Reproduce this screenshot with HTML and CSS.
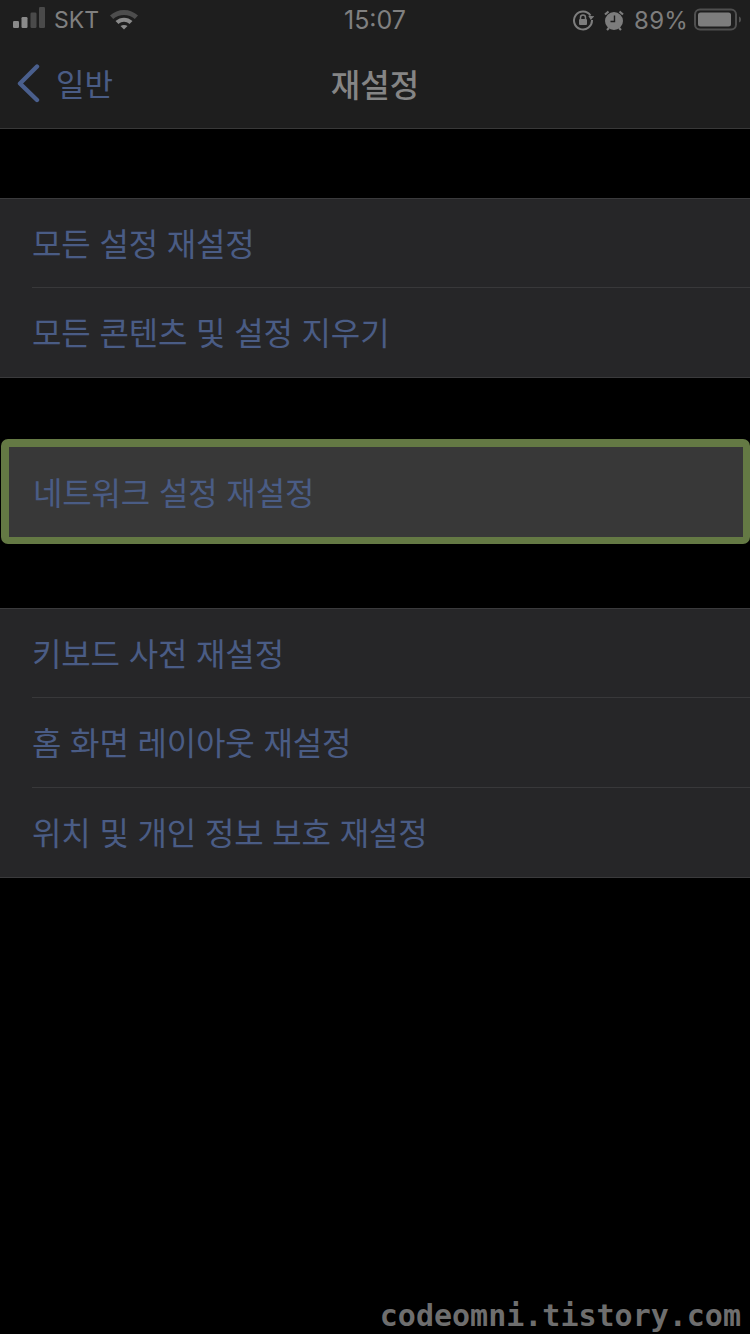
FILE: index.html
```html
<!DOCTYPE html>
<html lang="ko">
<head>
<meta charset="utf-8">
<title>재설정</title>
<link rel="stylesheet" href="styles.css">
</head>
<body>
<header class="top">
  <div class="status">
    <div class="status-left">
      <svg class="signal" width="34" height="22" viewBox="0 0 34 22"><rect x="0" y="14" width="6" height="7" rx="1.200" fill="#8a8a8a"/><rect x="8.500" y="10" width="6" height="11" rx="1.200" fill="#8a8a8a"/><rect x="17.500" y="5.500" width="6" height="15.500" rx="1.200" fill="#4a4a4a"/><rect x="26" y="0" width="6" height="21" rx="1.200" fill="#4a4a4a"/></svg>
      <span class="carrier">SKT</span>
      <svg class="wifi" width="30" height="24" viewBox="0 0 30 24"><path d="M1 8.500C8.500 1 21.500 1 29 8.500L25.800 12C20 6.500 10 6.500 4.200 12Z" fill="#4d4d4d"/><path d="M6.500 14C11.500 9.500 18.500 9.500 23.500 14L20.500 17C17 14 13 14 9.500 17Z" fill="#8a8a8a"/><path d="M11.500 19C13.500 17.500 16.500 17.500 18.500 19L15 22.500Z" fill="#8a8a8a"/></svg>
    </div>
    <span class="time">15:07</span>
    <div class="status-right">
      <svg width="22" height="22" viewBox="0 0 22 22"><path d="M18.500 6.500A9 9 0 1 0 20 11" fill="none" stroke="#7d7d7d" stroke-width="2"/><path d="M16 7h6l-3 4z" fill="#7d7d7d" transform="rotate(5 19 9)"/><rect x="7" y="10" width="8" height="6" rx="1" fill="#7d7d7d"/><path d="M8.500 10V8.500a2.500 2.500 0 0 1 5 0V10" fill="none" stroke="#7d7d7d" stroke-width="1.500"/></svg>
      <svg class="alarm" width="20" height="21" viewBox="0 0 20 21"><circle cx="10" cy="11" r="9" fill="#7d7d7d"/><path d="M1 4.500L4.500 1.500M19 4.500L15.500 1.500M3 20L5 18M17 20L15 18" stroke="#7d7d7d" stroke-width="2.200"/><path d="M10.500 5.500v6H6.500" fill="none" stroke="#1e1e1e" stroke-width="1.400"/></svg>
      <span class="pct">89%</span>
      <svg width="48" height="24" viewBox="0 0 48 24"><rect x="1" y="1.500" width="41" height="20" rx="5" fill="none" stroke="#4f4f4f" stroke-width="2"/><rect x="4" y="4.500" width="33" height="14" rx="2.500" fill="#7d7d7d"/><path d="M45 8.500c1.500.5 2 1.500 2 3s-.5 2.500-2 3z" fill="#4f4f4f"/></svg>
    </div>
  </div>
  <nav class="nav">
    <div class="back">
      <svg width="26" height="40" viewBox="0 0 26 40"><path d="M22 3.500L5 20.500L22 37" fill="none" stroke="#4a5f8d" stroke-width="4.400" stroke-linecap="round" stroke-linejoin="round"/></svg>
      <span class="back-label">일반</span>
    </div>
    <h1 class="title">재설정</h1>
  </nav>
</header>
<main>
  <section class="group group-first">
    <div class="row"><span class="label">모든 설정 재설정</span></div>
    <div class="row"><span class="label">모든 콘텐츠 및 설정 지우기</span></div>
  </section>
  <section class="highlight">
    <span class="label">네트워크 설정 재설정</span>
  </section>
  <section class="group">
    <div class="row"><span class="label">키보드 사전 재설정</span></div>
    <div class="row"><span class="label">홈 화면 레이아웃 재설정</span></div>
    <div class="row"><span class="label">위치 및 개인 정보 보호 재설정</span></div>
  </section>
</main>
<footer class="mark">codeomni.tistory.com</footer>
</body>
</html>
```
FILE: styles.css
```css
* { box-sizing: border-box; }
html, body { margin: 0; padding: 0; }
body {
  width: 750px;
  height: 1334px;
  background: #000;
  overflow: hidden;
  display: flex;
  flex-direction: column;
  font-family: "Noto Sans CJK KR", "Noto Sans", sans-serif;
}
.top {
  height: 129px;
  background: #1e1e1e;
  border-bottom: 1px solid #383838;
  display: flex;
  flex-direction: column;
}
.status {
  height: 40px;
  padding: 0 8px 0 13px;
  display: flex;
  align-items: center;
  justify-content: space-between;
  position: relative;
  color: #7d7d7d;
  font-family: Inter, "Liberation Sans", sans-serif;
}
.status-left { display: flex; align-items: center; gap: 7px; }
.carrier { font-size: 23px; color: #808080; }
.signal { margin-top: -4px; }
.wifi { margin: -2px 0 0 3px; }
.time {
  position: absolute;
  left: 0;
  right: 0;
  text-align: center;
  font-size: 25px;
  color: #808080;
}
.status-right { display: flex; align-items: center; gap: 10px; }
.pct { font-size: 24px; color: #7d7d7d; margin-right: -4px; letter-spacing: .2px; }
.nav {
  flex: 1;
  position: relative;
  display: flex;
  align-items: center;
  padding: 0 0 3px 15px;
}
.back { display: flex; align-items: center; gap: 15px; }
.back-label { font-size: 31px; line-height: 40px; color: #4a5c85; }
.title {
  position: absolute;
  left: 0;
  right: 0;
  margin: 0;
  text-align: center;
  font-size: 32px;
  line-height: 40px;
  font-weight: 500;
  color: #858585;
}
.group {
  background: #262628;
  border-top: 1px solid #3a3a3c;
  border-bottom: 1px solid #3a3a3c;
}
.group-first { margin-top: 69px; margin-bottom: 61px; }
.row {
  height: 90px;
  margin-left: 32px;
  padding-bottom: 3px;
  display: flex;
  align-items: center;
  border-bottom: 1px solid #38383a;
}
.row:last-child { border-bottom: 0; height: 89px; }
.group .row:first-child { height: 89px; }
.label {
  font-size: 32px;
  line-height: 40px;
  letter-spacing: -.15px;
  color: #4a5c85;
  white-space: nowrap;
}
.highlight {
  height: 105px;
  margin: 0 0 64px 1px;
  padding: 0 0 2px 24px;
  display: flex;
  align-items: center;
  background: #383838;
  border: 8px solid #647944;
  border-right-width: 7px;
  border-radius: 7px;
  border-bottom-width: 7px;
}
.mark {
  position: absolute;
  right: 9px;
  bottom: 0;
  font-family: "DejaVu Sans Mono", "Liberation Mono", monospace;
  font-size: 30px;
  font-weight: 700;
  line-height: 36px;
  color: #6e6e6e;
}
```
